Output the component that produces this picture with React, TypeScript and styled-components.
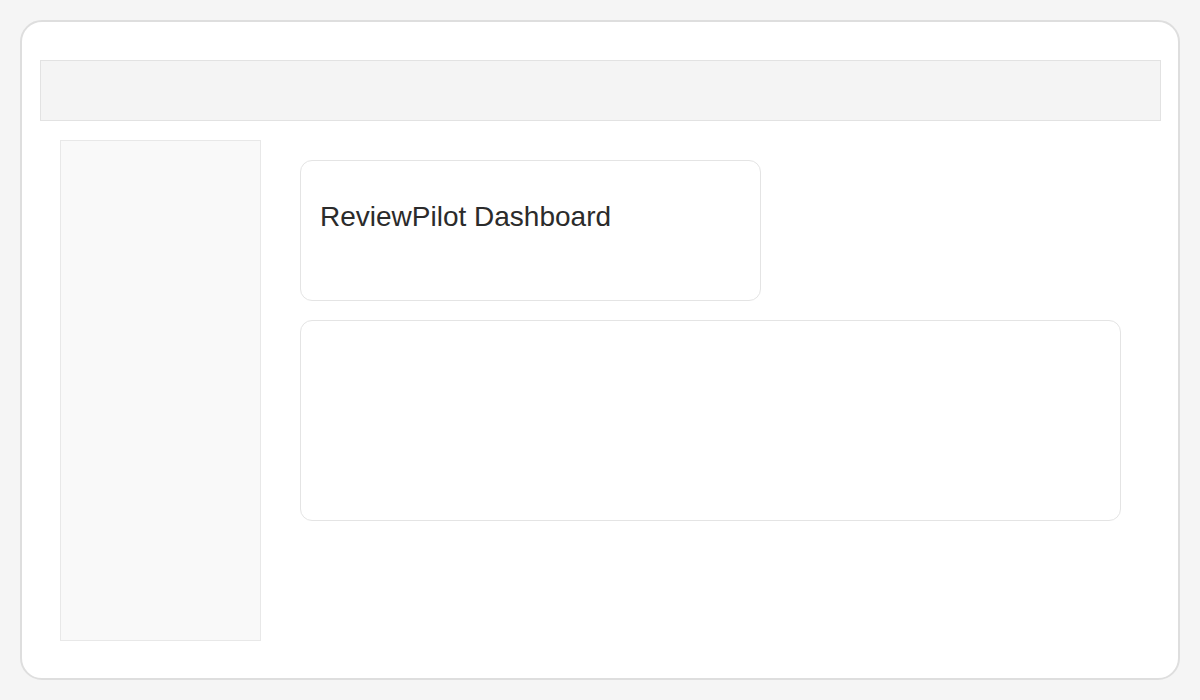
import React from "react";
import styled, { createGlobalStyle } from "styled-components";

const Global = createGlobalStyle`
  html, body { margin: 0; padding: 0; background: #f5f5f5; }
  body { font-family: "Liberation Sans", Arial, sans-serif; }
`;

const Page = styled.div`
  width: 1200px;
  height: 700px;
  box-sizing: border-box;
  padding: 20px;
`;

const Frame = styled.div`
  box-sizing: border-box;
  width: 1160px;
  height: 660px;
  background: #fff;
  border: 2px solid #dedede;
  border-radius: 22px;
  padding: 38px 18px 0 18px;
  display: flex;
  flex-direction: column;
  gap: 19px;
`;

const Header = styled.div`
  box-sizing: border-box;
  height: 61px;
  width: 1121px;
  background: #f4f4f4;
  border: 1px solid #e2e2e2;
`;

const Body = styled.div`
  display: flex;
  padding-left: 20px;
  gap: 39px;
`;

const Sidebar = styled.aside`
  box-sizing: border-box;
  width: 201px;
  height: 501px;
  background: #f9f9f9;
  border: 1px solid #e8e8e8;
`;

const Main = styled.main`
  display: flex;
  flex-direction: column;
  gap: 19px;
  padding-top: 20px;
`;

const Card = styled.section<{ $w: number; $h: number }>`
  box-sizing: border-box;
  width: ${(p) => p.$w}px;
  height: ${(p) => p.$h}px;
  background: #fff;
  border: 1px solid #e4e4e4;
  border-radius: 12px;
  padding: 20px 19px;
`;

const Title = styled.h1`
  margin: 20px 0 0 0;
  font-family: "Liberation Sans", Arial, sans-serif;
  font-weight: 400;
  font-size: 28px;
  line-height: 32px;
  color: #2b2b2b;
`;

export default function App() {
  return (
    <>
      <Global />
      <Page>
        <Frame>
          <Header />
          <Body>
            <Sidebar />
            <Main>
              <Card $w={461} $h={141}>
                <Title>ReviewPilot Dashboard</Title>
              </Card>
              <Card $w={821} $h={201} />
            </Main>
          </Body>
        </Frame>
      </Page>
    </>
  );
}
